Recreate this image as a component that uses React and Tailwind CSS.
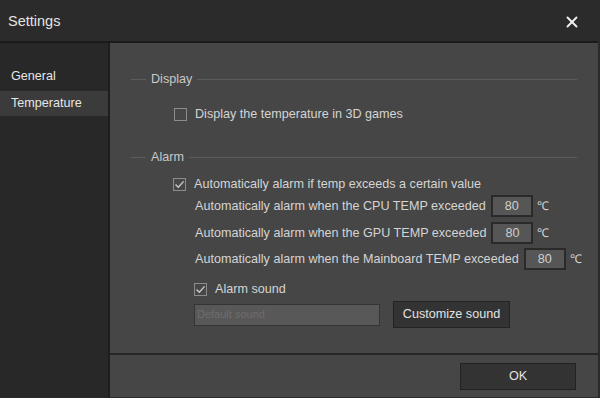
import { X } from 'lucide-react';

const Check = ({ checked }) => (
  <div className="w-[13px] h-[13px] border border-[#8c8c8c] bg-[#474747] flex items-center justify-center shrink-0">
    {checked && (
      <svg width="11" height="11" viewBox="0 0 11 11" fill="none">
        <path d="M1.5 5.5 L4.3 8.3 L9.6 2.4" stroke="#c9c9c9" strokeWidth="1.4" />
      </svg>
    )}
  </div>
);

const Legend = ({ label }) => (
  <div className="h-[16px] flex items-center">
    <div className="w-[15px] h-px bg-[#5c5c5c]" />
    <span className="px-[5px] text-[#c8c8c8]">{label}</span>
    <div className="flex-1 h-px bg-[#5c5c5c]" />
  </div>
);

const TempRow = ({ label, className }) => (
  <div className={`h-[22px] flex items-center whitespace-nowrap ${className}`}>
    <span>{label}</span>
    <div className="ml-[5px] w-[42px] h-[22px] shrink-0 bg-[#565656] border-2 border-[#2a2a2a] flex items-center justify-center text-[#cfcfcf]">
      80
    </div>
    <span className="ml-[4px] text-[12px]">℃</span>
  </div>
);

const App = () => {
  return (
    <div className="w-[600px] h-[398px] flex flex-col bg-[#464646] text-[12.6px] text-[#d4d4d4] font-['Liberation_Sans',Arial,sans-serif] border-r-2 border-b border-[#2a2a2a] overflow-hidden">
      <div className="h-[43px] shrink-0 bg-[#2b2b2b] border-b-2 border-[#1b1b1b] flex items-center justify-between pt-[3px] pl-[8px] pr-[17px]">
        <span className="text-[14.5px] text-[#e4e4e4]">Settings</span>
        <X size={18} strokeWidth={2.5} color="#f0f0f0" />
      </div>
      <div className="flex-1 flex min-h-0">
        <div className="w-[110px] shrink-0 bg-[#282828] border-r-2 border-[#1e1e1e] pt-[21px]">
          <div className="h-[25px] flex items-center pl-[11px] text-[#e6e6e6]">General</div>
          <div className="mt-[2px] h-[25px] flex items-center pl-[11px] bg-[#3b3b3b] text-[#e6e6e6]">Temperature</div>
        </div>
        <div className="flex-1 min-w-0 flex flex-col">
          <div className="h-[312px] shrink-0 border-b-2 border-[#262626] pt-[28px] pl-[21px] pr-[21px]">
            <Legend label="Display" />
            <div className="mt-[19px] h-[16px] flex items-center pl-[43px] gap-[8px]">
              <Check />
              <span>Display the temperature in 3D games</span>
            </div>
            <div className="mt-[27px]">
              <Legend label="Alarm" />
            </div>
            <div className="mt-[11px] h-[16px] flex items-center pl-[42px] gap-[8px]">
              <Check checked />
              <span>Automatically alarm if temp exceeds a certain value</span>
            </div>
            <div className="pl-[64px]">
              <TempRow className="mt-[3px]" label="Automatically alarm when the CPU TEMP exceeded" />
              <TempRow className="mt-[5px]" label="Automatically alarm when the GPU TEMP exceeded" />
              <TempRow className="mt-[4px]" label="Automatically alarm when the Mainboard TEMP exceeded" />
            </div>
            <div className="mt-[11px] h-[16px] flex items-center pl-[63px] gap-[8px]">
              <Check checked />
              <span>Alarm sound</span>
            </div>
            <div className="mt-[4px] h-[27px] flex items-center pl-[63px]">
              <div className="w-[186px] h-[22px] bg-[#585858] border border-[#343434] flex items-center pl-[2px] text-[11px] text-[#6e6e6e]">
                Default sound
              </div>
              <button className="ml-[13px] w-[117px] h-[27px] bg-[#333333] border border-[#242424] text-[#e2e2e2]">
                Customize sound
              </button>
            </div>
          </div>
          <div className="flex-1 flex items-center justify-end pr-[22px]">
            <button className="w-[116px] h-[27px] bg-[#333333] border border-[#222222] text-[#e2e2e2]">OK</button>
          </div>
        </div>
      </div>
    </div>
  );
};

export default App;
